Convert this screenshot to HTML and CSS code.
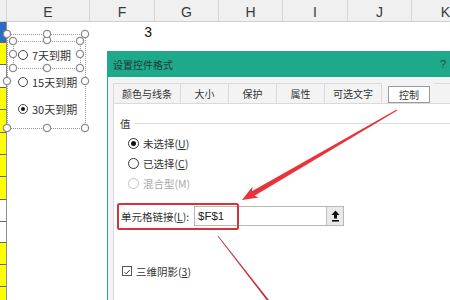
FILE: index.html
```html
<!DOCTYPE html>
<html lang="zh-CN">
<head>
    <meta charset="UTF-8">
    <title>设置控件格式</title>
    <link rel="stylesheet" href="styles.css">
</head>
<body>
    <div class="sheet">
        <div class="col-head">
            <div class="ch ch-d"></div>
            <div class="ch ch-e">E</div>
            <div class="ch ch-f">F</div>
            <div class="ch ch-g">G</div>
            <div class="ch ch-g">H</div>
            <div class="ch ch-f">I</div>
            <div class="ch ch-g">J</div>
            <div class="ch ch-k">K</div>
        </div>
        <div class="grid">
            <div class="col-d">
                <div class="cell blue"></div>
                <div class="cell yellow"></div>
                <div class="cell"></div>
                <div class="cell yellow"></div>
                <div class="cell yellow"></div>
                <div class="cell yellow"></div>
                <div class="cell yellow"></div>
                <div class="cell yellow"></div>
                <div class="cell"></div>
                <div class="cell"></div>
                <div class="cell yellow"></div>
                <div class="cell yellow"></div>
                <div class="cell yellow"></div>
            </div>
            <div class="col-e"></div>
            <div class="col-f">
                <div class="num">3</div>
            </div>
        </div>
    </div>

    <!-- option buttons inside the selected group box -->
    <div class="ctrl-group">
        <div class="ctrl-sub"></div>
        <div class="ctrl-opt"><span class="dot"></span><span>7天到期</span></div>
        <div class="ctrl-opt"><span class="dot"></span><span>15天到期</span></div>
        <div class="ctrl-opt"><span class="dot on"></span><span>30天到期</span></div>
    </div>

    <div class="dialog">
        <div class="dlg-title">
            <span>设置控件格式</span>
            <span class="help">?</span>
        </div>
        <div class="dlg-body">
            <div class="tabs">
                <div class="tab">颜色与线条</div>
                <div class="tab">大小</div>
                <div class="tab">保护</div>
                <div class="tab">属性</div>
                <div class="tab">可选文字</div>
                <div class="tab active">控制</div>
                <div class="tab"></div>
            </div>
            <div class="panel">
                <div class="legend"><span>值</span></div>
                <div class="opt"><span class="radio on"></span><span>未选择(<u>U</u>)</span></div>
                <div class="opt"><span class="radio"></span><span>已选择(<u>C</u>)</span></div>
                <div class="opt dim"><span class="radio"></span><span>混合型(M)</span></div>

                <div class="link-row">
                    <span class="link-label">单元格链接(<u>L</u>):</span>
                    <div class="ref-input">
                        <span class="ref-text">$F$1</span>
                        <span class="ref-btn">
                            <svg width="9" height="12" viewBox="0 0 9 12">
                                <path d="M4.5 0.5 L8.5 5 H6 V8.5 H3 V5 H0.5 Z" fill="#111"/>
                                <rect x="1" y="10" width="7" height="1.6" fill="#111"/>
                            </svg>
                        </span>
                    </div>
                </div>

                <div class="check-row">
                    <span class="check">
                        <svg width="10" height="10" viewBox="0 0 10 10">
                            <path d="M1.8 5.2 L4 7.4 L8.3 2.6" fill="none" stroke="#222" stroke-width="1.1"/>
                        </svg>
                    </span>
                    <span>三维阴影(<u>3</u>)</span>
                </div>
            </div>
        </div>
    </div>

    <!-- handles and annotation marks drawn on top -->
    <svg class="overlay" width="450" height="300" viewBox="0 0 450 300">
        <g fill="#fff" stroke="#8c8c8c" stroke-width="1.3">
            <circle cx="47" cy="40" r="3.6"/>
            <circle cx="7" cy="34" r="3.6"/>
            <circle cx="47" cy="34" r="3.6"/>
            <circle cx="85" cy="34" r="3.6"/>
            <circle cx="13" cy="41" r="3.6"/>
            <circle cx="80" cy="41" r="3.6"/>
            <circle cx="13" cy="54" r="3.6"/>
            <circle cx="80" cy="54" r="3.6"/>
            <circle cx="13" cy="68" r="3.6"/>
            <circle cx="47" cy="68" r="3.6"/>
            <circle cx="80" cy="68" r="3.6"/>
            <circle cx="7" cy="81" r="3.6"/>
            <circle cx="85" cy="81" r="3.6"/>
            <circle cx="7" cy="128" r="3.6"/>
            <circle cx="47" cy="128" r="3.6"/>
            <circle cx="85" cy="128" r="3.6"/>
        </g>
        <rect x="118" y="204" width="120" height="25" rx="1.5" fill="none" stroke="#d2333d" stroke-width="2"/>
        <polygon points="397.3,110.4 254.5,195.7 258.8,197.4 242,200 252.6,186.6 251.9,191.3 396.7,109.6" fill="#e8333b"/>
        <polygon points="218,235.6 268.9,300 266.6,300 217.6,236.2" fill="#c22a3c"/>
    </svg>
</body>
</html>
```

FILE: styles.css
```css
* {
    box-sizing: border-box;
}

body {
    margin: 0;
    width: 450px;
    height: 300px;
    overflow: hidden;
    position: relative;
    background: #fff;
    font-family: "Noto Sans CJK SC", sans-serif;
    color: #222;
}

/* spreadsheet */
.col-head {
    display: flex;
    height: 22px;
    background: #f0f0f0;
    border-bottom: 1px solid #d0d0d0;
}

.ch {
    flex: none;
    border-right: 1px solid #d6d6d6;
    font: 14px "Liberation Sans", sans-serif;
    color: #3a3a3a;
    text-align: center;
    padding-top: 4px;
}

.ch-d { width: 7px; }
.ch-e { width: 83px; }
.ch-f { width: 65px; }
.ch-g { width: 64px; }
.ch-k { width: 38px; border-right: none; text-align: right; padding-right: 0; }

.grid {
    display: flex;
    height: 278px;
    overflow: hidden;
}

.col-d {
    width: 7px;
    display: grid;
    grid-template-rows: 21px 22px 23px 22px 23px 22px 22px 23px 22px 21px 22px 22px 13px;
    border-right: 1px solid #8d8d8d;
}

.cell {
    border-bottom: 1px solid #666;
}

.cell:last-child {
    border-bottom: none;
}

.cell.yellow { background: #ffff00; }
.cell.blue { background: #2c6cc2; }

.col-e {
    width: 83px;
}

.col-f {
    width: 65px;
}

.num {
    height: 21px;
    text-align: right;
    padding-right: 3px;
    font: 14px/21px "Liberation Sans", sans-serif;
    color: #111;
}

/* group box on the sheet */
.ctrl-group {
    position: absolute;
    left: 7px;
    top: 34px;
    width: 79px;
    height: 95px;
    border: 1px dotted #9a9a9a;
    padding: 10px 0 0 10px;
    display: flex;
    flex-direction: column;
    gap: 7px;
}

.ctrl-sub {
    position: absolute;
    left: 5px;
    top: 6px;
    width: 68px;
    height: 28px;
    border: 1px dotted #a0a0a0;
}

.ctrl-opt {
    display: flex;
    align-items: center;
    gap: 4px;
    height: 20px;
    font-size: 11px;
    color: #333;
    white-space: nowrap;
}

.dot {
    flex: none;
    width: 10px;
    height: 10px;
    border-radius: 50%;
    border: 1px solid #444;
    background: #fff;
    position: relative;
}

.dot.on::after,
.radio.on::after {
    content: "";
    position: absolute;
    left: 2px;
    top: 2px;
    right: 2px;
    bottom: 2px;
    border-radius: 50%;
    background: #111;
}

/* dialog */
.dialog {
    position: absolute;
    left: 107px;
    top: 51px;
    width: 343px;
    height: 249px;
    overflow: hidden;
    border-left: 1px solid #1fa88a;
    background: #f3f3f3;
}

.dlg-title {
    height: 26px;
    background: #1fa98b;
    display: flex;
    align-items: center;
    justify-content: space-between;
    padding: 0 4px 0 5px;
    font-size: 10px;
    color: #1d3a33;
}

.help {
    font: 11px "Liberation Sans", sans-serif;
    color: #2b4a42;
}

.dlg-body {
    padding: 6px 0 0 5px;
}

.tabs {
    display: flex;
    align-items: flex-end;
    height: 20px;
}

.tab {
    flex: none;
    min-width: 48px;
    height: 20px;
    padding: 0 8px;
    text-align: center;
    white-space: nowrap;
    font-size: 10px;
    line-height: 19px;
    color: #333;
    background: #f3f3f3;
    border: 1px solid #dadada;
    border-bottom: none;
    border-left: none;
}

.tab:first-child {
    border-left: 1px solid #dadada;
}

.tab.active {
    min-width: 42px;
    height: 17px;
    line-height: 15px;
    margin: 0 4px 0 6px;
    background: #fff;
    border: 1px solid #9a9a9a;
}

.panel {
    height: 220px;
    background: #fff;
    border-top: 1px solid #dadada;
    border-left: 1px solid #dadada;
    padding-left: 6px;
    font-size: 10.5px;
    color: #333;
}

.legend {
    display: flex;
    align-items: center;
    height: 14px;
    padding-top: 12px;
    box-sizing: content-box;
    margin-bottom: 3px;
}

.legend::after {
    content: "";
    flex: 1;
    height: 1px;
    margin-left: 4px;
    background: #dcdcdc;
}

.opt {
    display: flex;
    align-items: center;
    gap: 4px;
    height: 20px;
    padding-left: 8px;
    white-space: nowrap;
}

.opt.dim {
    color: #a8a8a8;
}

.radio {
    flex: none;
    width: 11px;
    height: 11px;
    border-radius: 50%;
    border: 1px solid #333;
    position: relative;
}

.opt.dim .radio {
    border-color: #c4c4c4;
}

.link-row {
    display: flex;
    align-items: center;
    height: 20px;
    margin-top: 13px;
    padding-left: 1px;
}

.link-label {
    width: 73px;
    flex: none;
    white-space: nowrap;
}

.ref-input {
    flex: none;
    width: 150px;
    height: 20px;
    display: flex;
    align-items: center;
    justify-content: space-between;
    border: 1px solid #b8b8b8;
    background: #fff;
}

.ref-text {
    padding-left: 3px;
    font: 11.5px "Liberation Sans", sans-serif;
    color: #222;
}

.ref-btn {
    width: 17px;
    height: 18px;
    display: flex;
    align-items: center;
    justify-content: center;
    background: #e9e9e9;
    border-left: 1px solid #c0c0c0;
}

.check-row {
    display: flex;
    align-items: center;
    gap: 4px;
    height: 14px;
    margin-top: 38px;
    padding-left: 2px;
    white-space: nowrap;
}

.check {
    flex: none;
    width: 10px;
    height: 10px;
    border: 1px solid #555;
    display: flex;
}

.overlay {
    position: absolute;
    left: 0;
    top: 0;
    pointer-events: none;
}
```
